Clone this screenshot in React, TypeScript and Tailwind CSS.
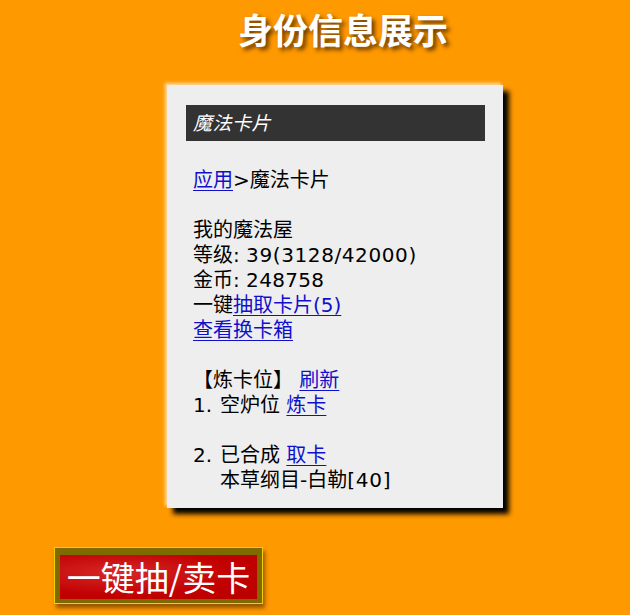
import React from 'react';

const cjk = '"DejaVu Sans", "Noto Sans CJK SC", sans-serif';

function Link({ children }: { children: React.ReactNode }) {
  return <a href="#" className="text-[#1010cc] underline underline-offset-[3px] decoration-1">{children}</a>;
}

function Slot({ n, children }: { n: string; children: React.ReactNode }) {
  return (
    <div className="flex">
      <span className="w-[27px] shrink-0">{n}</span>
      <div>{children}</div>
    </div>
  );
}

export default function App() {
  return (
    <div className="w-[630px] h-[615px] bg-[#ff9900] overflow-hidden" style={{ fontFamily: cjk }}>
      {/* page title */}
      <div className="pl-[56px] pt-[12px] flex justify-center">
        <h1 className="text-[35px] leading-[40px] font-bold text-white [text-shadow:3px_3px_4px_rgba(60,30,0,0.8)]">
          身份信息展示
        </h1>
      </div>

      {/* card panel */}
      <div className="ml-[167px] mt-[33px] w-[336px] bg-[#eeeeee] pt-[20px] pl-[19px] pr-[18px] pb-[15px] shadow-[6px_6px_5px_#000,-2px_-2px_3px_#ffd9a0]">
        <div className="h-[36px] bg-[#333333] flex items-center pl-[7px]">
          <span className="text-white italic text-[19px] tracking-[0.5px]">魔法卡片</span>
        </div>

        <div className="pl-[7px] mt-[27px] text-[20px] leading-[25px] text-black">
          <div>
            <Link>应用</Link>&gt;魔法卡片
          </div>
          <div className="h-[25px]" />
          <div>我的魔法屋</div>
          <div>
            等级: <span className="tracking-[0.6px]">39(3128/42000)</span>
          </div>
          <div>
            金币: <span className="tracking-[0.3px]">248758</span>
          </div>
          <div>
            一键<Link>抽取卡片(5)</Link>
          </div>
          <div>
            <Link>查看换卡箱</Link>
          </div>
          <div className="h-[25px]" />
          <div>
            【炼卡位】 <Link>刷新</Link>
          </div>
          <Slot n="1.">
            空炉位 <Link>炼卡</Link>
          </Slot>
          <div className="h-[25px]" />
          <Slot n="2.">
            <div>
              已合成 <Link>取卡</Link>
            </div>
            <div>
              本草纲目-白勒<span className="tracking-[0.8px]">[40]</span>
            </div>
          </Slot>
        </div>
      </div>

      {/* draw / sell button */}
      <div className="ml-[54px] mt-[39px] w-[209px] h-[57px] border-[1.5px] border-[#f0d000] bg-[#7f6a00] pt-[7px] px-[5px] pb-[4px] shadow-[2px_4px_4px_rgba(80,40,0,0.6)]">
        <div className="h-full flex items-center justify-center bg-[radial-gradient(ellipse_at_30%_40%,#d62828_0%,#c20000_60%,#b80000_100%)]">
          <span className="text-white text-[34px] leading-none" style={{ fontFamily: '"Noto Sans CJK SC", sans-serif' }}>
            一键抽/卖卡
          </span>
        </div>
      </div>
    </div>
  );
}
